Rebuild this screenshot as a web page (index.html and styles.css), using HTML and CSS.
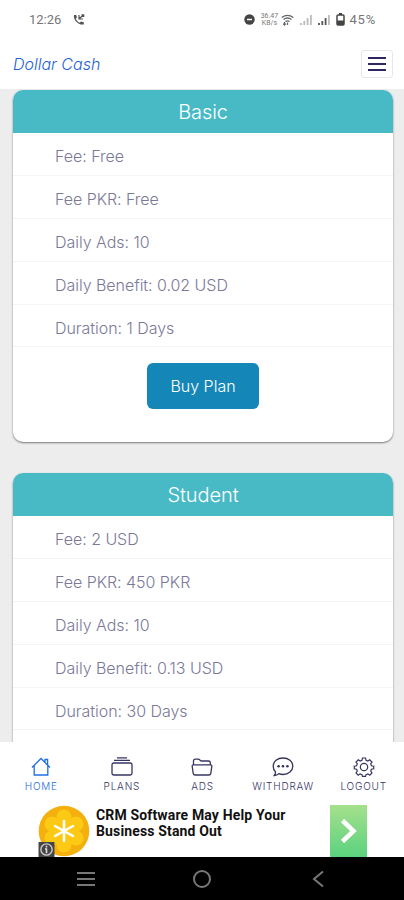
FILE: index.html
```
<!DOCTYPE html>
<html lang="en">
<head>
  <meta charset="UTF-8">
  <title>Dollar Cash</title>
  <meta name="viewport" content="width=device-width, initial-scale=1.0">
  <link rel="stylesheet" href="styles.css">
</head>
<body>
  <div class="status-bar">
    <span class="time">12:26</span>
    <svg class="call-icon" width="12" height="12" viewBox="0 0 12 12">
      <path d="M1 1h2.200l.8 2.600-1.300 1.200c.9 1.900 2 3 3.900 3.900l1.400-1.200 2.800.8v2.200C5.500 11.500 0 6 1 1z" fill="#555"/>
      <path d="M6 1v4h4M6.200 4.800L10.500 .8M8.500 .8h2.200V3" fill="none" stroke="#555" stroke-width="1.200"/>
    </svg>
    <div class="status-right">
      <svg width="11" height="11" viewBox="0 0 11 11">
        <circle cx="5.500" cy="5.500" r="5.200" fill="#444"/>
        <path d="M3 5.500h5" stroke="#fff" stroke-width="1.500"/>
      </svg>
      <span class="speed">36.47<br>KB/s</span>
      <svg class="wifi" width="13" height="12" viewBox="0 0 13 12" fill="none" stroke="#666" stroke-width="1.300">
        <path d="M.7 3.600Q6.500-1 12.300 3.600M2.500 5.600Q6.500 2.400 10.500 5.600M4.400 7.600Q6.500 6 8.600 7.600"/>
        <path d="M3.500 8v3M2.200 9.600l1.300 1.400 1.200-1.400M6.500 11V8.500"/>
      </svg>
      <svg class="signal" width="12" height="11" viewBox="0 0 12 11" stroke="#bbb" stroke-width="1.800">
        <path d="M1 11V9M4.300 11V7M7.600 11V4M10.900 11V1"/>
      </svg>
      <svg class="signal" width="12" height="11" viewBox="0 0 12 11" stroke-width="1.800">
        <path d="M1 11V9M4.300 11V7M7.600 11V4" stroke="#555"/>
        <path d="M10.900 11V1" stroke="#bbb"/>
      </svg>
      <svg class="battery" width="9" height="13" viewBox="0 0 9 13">
        <path d="M3 0h3v2H3z" fill="#444"/>
        <rect x="1" y="2" width="7" height="10" rx="1" fill="#fff" stroke="#444" stroke-width="1.500"/>
        <path d="M1 7.500h7V12H1z" fill="#444"/>
      </svg>
      <span class="percent">45%</span>
    </div>
  </div>

  <header class="top-bar">
    <span class="brand">Dollar Cash</span>
    <button class="menu-btn" aria-label="Menu">
      <span></span>
      <span></span>
      <span></span>
    </button>
  </header>

  <main class="plans">
    <div class="card">
      <h2>Basic</h2>
      <ul>
        <li>Fee: Free</li>
        <li>Fee PKR: Free</li>
        <li>Daily Ads: 10</li>
        <li>Daily Benefit: 0.02 USD</li>
        <li>Duration: 1 Days</li>
      </ul>
      <button class="btn">Buy Plan</button>
    </div>
    <div class="card">
      <h2>Student</h2>
      <ul>
        <li>Fee: 2 USD</li>
        <li>Fee PKR: 450 PKR</li>
        <li>Daily Ads: 10</li>
        <li>Daily Benefit: 0.13 USD</li>
        <li>Duration: 30 Days</li>
      </ul>
    </div>
  </main>

  <nav class="tabs">
    <a class="tab active">
      <svg width="22" height="22" viewBox="0 0 22 22">
        <path d="M2 11.500L11 2.500l9 9M4.200 9.600V19h13.600V9.600M15 6V3.500h2.600v5.200"/>
      </svg>
      <span>HOME</span>
    </a>
    <a class="tab">
      <svg width="22" height="22" viewBox="0 0 22 22">
        <rect x="1" y="7" width="20" height="12" rx="1.800"/>
        <path d="M3 4.300h16M6 1.800h10"/>
      </svg>
      <span>PLANS</span>
    </a>
    <a class="tab">
      <svg width="22" height="22" viewBox="0 0 22 22">
        <path d="M2.500 9V5q0-1.800 1.800-1.800h3.500l2.400 1.800h7.300q1.800 0 1.800 1.800V9"/>
        <path d="M2.500 8.800h17q1.500 0 1.300 1.500l-1 7q-.3 1.700-2 1.700H4.200q-1.700 0-2-1.700l-1-7Q1 8.800 2.500 8.800z"/>
      </svg>
      <span>ADS</span>
    </a>
    <a class="tab">
      <svg width="22" height="22" viewBox="0 0 22 22">
        <path d="M11 2c5.500 0 9.800 3.500 9.800 8.200s-4.300 8.300-9.800 8.300c-1.500 0-2.900-.3-4.200-.8-1.400 1.200-3 1.700-4.500 1.800.9-1.100 1.300-2.300 1.100-3.700C2 14.300 1.200 12.300 1.200 10.200 1.200 5.500 5.500 2 11 2z"/>
        <g class="dots">
          <circle cx="6.600" cy="10.300" r="1.300"/>
          <circle cx="11" cy="10.300" r="1.300"/>
          <circle cx="15.400" cy="10.300" r="1.300"/>
        </g>
      </svg>
      <span>WITHDRAW</span>
    </a>
    <a class="tab">
      <svg width="22" height="22" viewBox="0 0 24 24">
        <path d="M10.300 2.200h3.400l.5 2.500 2 .8 2.100-1.400 2.400 2.400-1.400 2.100.8 2 2.500.5v2.800l-2.500.5-.8 2 1.400 2.100-2.400 2.400-2.100-1.400-2 .8-.5 1.900h-3.400l-.5-1.900-2-.8-2.100 1.400-2.400-2.400 1.400-2.100-.8-2-2.500-.5v-2.800l2.500-.5.8-2-1.400-2.100 2.400-2.400 2.100 1.400 2-.8z"/>
        <circle cx="12" cy="12" r="4"/>
      </svg>
      <span>LOGOUT</span>
    </a>
  </nav>

  <div class="ad">
    <div class="ad-logo">
      <svg width="52" height="52" viewBox="0 0 52 52">
        <circle cx="26" cy="26" r="25.300" fill="#f4b00d"/>
        <g fill="#fcc914">
          <circle cx="26" cy="12" r="7.500"/>
          <circle cx="38" cy="19" r="7.500"/>
          <circle cx="38" cy="33" r="7.500"/>
          <circle cx="26" cy="40" r="7.500"/>
          <circle cx="14" cy="33" r="7.500"/>
          <circle cx="14" cy="19" r="7.500"/>
          <circle cx="26" cy="26" r="11"/>
        </g>
        <path d="M26 16v20M17 21l18 10M17 31l18-10" stroke="#fff" stroke-width="2.500" stroke-linecap="round"/>
      </svg>
      <svg class="ad-info" width="17" height="15" viewBox="0 0 17 16">
        <path d="M0 0h17v16H0z" fill="#444"/>
        <circle cx="8.500" cy="8" r="6" fill="none" stroke="#ccc" stroke-width="1.500"/>
        <path d="M8.500 7v5M8.500 4v1.800M7 7.300h1.500" stroke="#ddd" stroke-width="1.700"/>
      </svg>
    </div>
    <p>CRM Software May Help Your Business Stand Out</p>
    <div class="ad-arrow">
      <svg width="18" height="26" viewBox="0 0 18 26">
        <path d="M2.500 2.500L13.500 13l-11 10.500" fill="none" stroke="#fff" stroke-width="4.500"/>
      </svg>
    </div>
  </div>

  <div class="system-nav">
    <svg width="20" height="18" viewBox="0 0 20 18">
      <path d="M1 3h18M1 9h18M1 15h18" stroke="#777" stroke-width="2"/>
    </svg>
    <svg width="20" height="20" viewBox="0 0 20 20">
      <circle cx="10" cy="10" r="8" fill="none" stroke="#777" stroke-width="2"/>
    </svg>
    <svg width="20" height="18" viewBox="0 0 20 18">
      <path d="M15 1.500L6 9l9 7.500" fill="none" stroke="#777" stroke-width="2"/>
    </svg>
  </div>
</body>
</html>
```
FILE: styles.css
```
* {
  box-sizing: border-box;
}
body {
  margin: 0;
  height: 900px;
  display: flex;
  flex-direction: column;
  overflow: hidden;
  background: #ededed;
  font-family: Inter, 'Liberation Sans', sans-serif;
}
svg {
  display: block;
  flex: none;
}

.status-bar {
  flex: none;
  height: 40px;
  padding: 0 28px 1px 29px;
  display: flex;
  align-items: center;
  background: #fff;
  color: #777;
  font-family: Roboto, sans-serif;
  font-size: 13px;
}
.call-icon {
  margin-left: 12px;
}
.status-right {
  margin-left: auto;
  display: flex;
  align-items: center;
}
.speed {
  width: 18px;
  margin-left: 5px;
  font-size: 7px;
  line-height: 7px;
  text-align: center;
}
.wifi {
  margin-left: 3px;
}
.signal {
  margin-left: 6px;
}
.battery {
  margin: 0 4px 0 6px;
}
.percent {
  letter-spacing: 0.8px;
}

.top-bar {
  flex: none;
  height: 49px;
  padding: 0 11px 2px 13px;
  display: flex;
  align-items: center;
  justify-content: space-between;
  background: #fff;
}
.brand {
  color: #1f5fd6;
  font-size: 16px;
  font-style: italic;
  font-weight: 300;
}
.menu-btn {
  width: 32px;
  height: 28px;
  padding: 0;
  display: flex;
  flex-direction: column;
  align-items: center;
  justify-content: center;
  gap: 4px;
  background: #fff;
  border: 1px solid #e6e6ec;
  border-radius: 3px;
}
.menu-btn span {
  width: 18px;
  height: 2px;
  background: #2f2760;
}

.plans {
  flex: 1;
  min-height: 0;
  overflow: hidden;
  padding: 1px 11px 0 13px;
}
.card {
  height: 352px;
  margin-bottom: 31px;
  overflow: hidden;
  background: #fff;
  border-radius: 10px;
  box-shadow: 0 1px 2px rgba(0,0,0,0.5);
  text-align: center;
}
.card h2 {
  margin: 0;
  height: 43px;
  background: #48bac6;
  color: #fff;
  font-size: 20px;
  font-weight: 300;
  line-height: 44px;
  letter-spacing: -0.1px;
}
.card ul {
  margin: 0;
  padding: 0;
  list-style: none;
  text-align: left;
}
.card li {
  height: 42.9px;
  padding: 3px 0 0 42px;
  border-bottom: 1px solid #f4f4f4;
  color: #7b7998;
  font-size: 16px;
  font-weight: 300;
  line-height: 41px;
  letter-spacing: -0.04px;
}
.btn {
  width: 112px;
  height: 46px;
  margin-top: 16px;
  border: none;
  border-radius: 6px;
  background: #1586b8;
  color: #fff;
  font-family: inherit;
  font-size: 16px;
  font-weight: 300;
}

.tabs {
  flex: none;
  height: 62px;
  padding-left: 1px;
  display: grid;
  grid-template-columns: repeat(5, 1fr);
  background: #fff;
}
.tab {
  padding-top: 14px;
  display: flex;
  flex-direction: column;
  align-items: center;
  gap: 2px;
  color: #37345f;
  font-size: 10px;
  font-weight: 300;
  line-height: 12px;
  letter-spacing: 0.8px;
}
.tab svg {
  fill: none;
  stroke: currentColor;
  stroke-width: 1.3;
}
.tab .dots {
  fill: currentColor;
  stroke: none;
}
.tab.active {
  color: #1f6fe0;
}

.ad {
  flex: none;
  height: 53px;
  padding: 0 37px 0 38px;
  display: flex;
  overflow: hidden;
  background: #fff;
}
.ad-logo {
  position: relative;
  width: 52px;
  padding-top: 1px;
}
.ad-info {
  position: absolute;
  left: 0;
  bottom: 0;
}
.ad p {
  width: 205px;
  margin: 3px 0 0 6px;
  color: #111;
  font-family: Roboto, sans-serif;
  font-size: 14px;
  font-weight: 700;
  line-height: 16px;
  letter-spacing: 0.15px;
}
.ad-arrow {
  width: 37px;
  height: 52px;
  margin: 1px 0 0 auto;
  display: flex;
  align-items: center;
  justify-content: center;
  background: linear-gradient(#a5e08c, #5bd27f);
}

.system-nav {
  flex: none;
  height: 43px;
  padding: 0 76px;
  display: flex;
  align-items: center;
  justify-content: space-between;
  background: #000;
}
```
